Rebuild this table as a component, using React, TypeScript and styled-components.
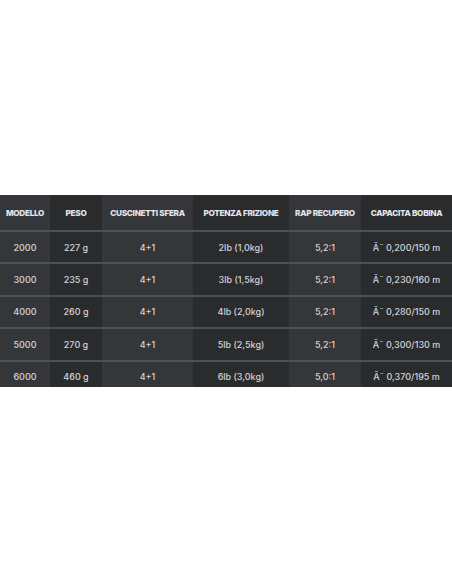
import styled, { createGlobalStyle } from "styled-components";

const GlobalStyle = createGlobalStyle`
  html, body {
    margin: 0;
    padding: 0;
    background: #ffffff;
  }
  body {
    font-family: Inter, "Liberation Sans", sans-serif;
  }
`;

const columns = [
  { label: "MODELLO", width: 50 },
  { label: "PESO", width: 52 },
  { label: "CUSCINETTI SFERA", width: 91 },
  { label: "POTENZA FRIZIONE", width: 96 },
  { label: "RAP RECUPERO", width: 72 },
  { label: "CAPACITA BOBINA", width: 91 },
];

const rows = [
  ["2000", "227 g", "4+1", "2lb (1,0kg)", "5,2:1", "Ã˜ 0,200/150 m"],
  ["3000", "235 g", "4+1", "3lb (1,5kg)", "5,2:1", "Ã˜ 0,230/160 m"],
  ["4000", "260 g", "4+1", "4lb (2,0kg)", "5,2:1", "Ã˜ 0,280/150 m"],
  ["5000", "270 g", "4+1", "5lb (2,5kg)", "5,2:1", "Ã˜ 0,300/130 m"],
  ["6000", "460 g", "4+1", "6lb (3,0kg)", "5,0:1", "Ã˜ 0,370/195 m"],
];

export default function App() {
  return (
    <>
      <GlobalStyle />
      <Page>
        <TableClip>
          <SpecTable>
            <colgroup>
              {columns.map((c) => (
                <col key={c.label} style={{ width: c.width }} />
              ))}
            </colgroup>
            <thead>
              <tr>
                {columns.map((c, i) => (
                  <HeadCell key={c.label} $shade={i % 2 === 0}>
                    {c.label}
                  </HeadCell>
                ))}
              </tr>
            </thead>
            <tbody>
              {rows.map((r) => (
                <tr key={r[0]}>
                  {r.map((v, i) => (
                    <Cell key={i} $shade={i % 2 === 0}>
                      {v}
                    </Cell>
                  ))}
                </tr>
              ))}
            </tbody>
          </SpecTable>
        </TableClip>
      </Page>
    </>
  );
}

const Page = styled.div`
  width: 452px;
  height: 584px;
  padding-top: 195px;
  box-sizing: border-box;
  background: #ffffff;
`;

const TableClip = styled.div`
  height: 192px;
  overflow: hidden;
  background: #2a2b2d;
`;

const SpecTable = styled.table`
  width: 452px;
  table-layout: fixed;
  border-collapse: collapse;
  border-spacing: 0;
`;

const HeadCell = styled.th<{ $shade: boolean }>`
  height: 35px;
  padding: 0;
  background: ${(p) => (p.$shade ? "#343639" : "#2a2b2d")};
  color: #e4e6ea;
  font-size: 8.2px;
  font-weight: 800;
  letter-spacing: -0.3px;
  text-align: center;
  text-transform: uppercase;
  white-space: nowrap;
  border-bottom: 2px solid #4b505c;
`;

const Cell = styled.td<{ $shade: boolean }>`
  height: 30.4px;
  padding: 0;
  background: ${(p) => (p.$shade ? "#343639" : "#2a2b2d")};
  color: #d2d4d8;
  font-size: 9px;
  font-weight: 500;
  text-align: center;
  white-space: nowrap;
  border-bottom: 2px solid #4b505c;
`;
